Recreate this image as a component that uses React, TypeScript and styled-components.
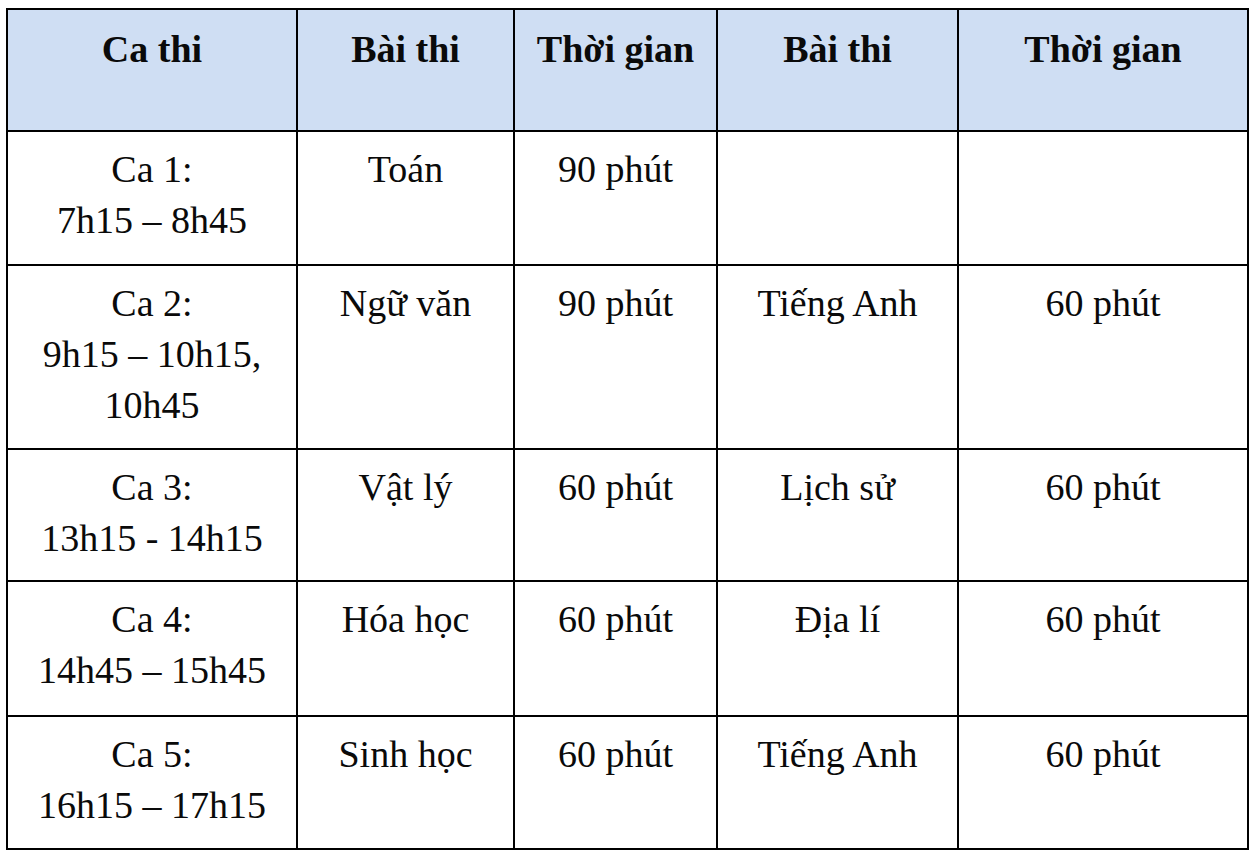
import styled, { createGlobalStyle } from "styled-components";

const GlobalStyle = createGlobalStyle`
  html, body {
    margin: 0;
    padding: 0;
    background: #ffffff;
  }
`;

const Page = styled.div`
  padding: 8px 0 0 6px;
`;

const Table = styled.table`
  border-collapse: collapse;
  table-layout: fixed;
  width: 1241px;
  font-family: "Liberation Serif", "Times New Roman", serif;
  color: #0a0a0a;
`;

const Row = styled.tr<{ $h: number }>`
  height: ${(p) => p.$h}px;
`;

const HeadCell = styled.th`
  background: #cfdef3;
  border: 2px solid #000;
  font-size: 38px;
  font-weight: bold;
  line-height: 51px;
  text-align: center;
  vertical-align: top;
  padding: 14px 4px 0;
`;

const Cell = styled.td`
  border: 2px solid #000;
  font-size: 38px;
  line-height: 51px;
  text-align: center;
  vertical-align: top;
  padding: 12px 4px 0;
`;

interface Shift {
  name: string[];
  subject1: string;
  time1: string;
  subject2: string;
  time2: string;
  height: number;
}

const shifts: Shift[] = [
  { name: ["Ca 1:", "7h15 – 8h45"], subject1: "Toán", time1: "90 phút", subject2: "", time2: "", height: 134 },
  { name: ["Ca 2:", "9h15 – 10h15,", "10h45"], subject1: "Ngữ văn", time1: "90 phút", subject2: "Tiếng Anh", time2: "60 phút", height: 184 },
  { name: ["Ca 3:", "13h15 - 14h15"], subject1: "Vật lý", time1: "60 phút", subject2: "Lịch sử", time2: "60 phút", height: 132 },
  { name: ["Ca 4:", "14h45 – 15h45"], subject1: "Hóa học", time1: "60 phút", subject2: "Địa lí", time2: "60 phút", height: 135 },
  { name: ["Ca 5:", "16h15 – 17h15"], subject1: "Sinh học", time1: "60 phút", subject2: "Tiếng Anh", time2: "60 phút", height: 133 },
];

const App: React.FC = () => {
  return (
    <Page>
      <GlobalStyle />
      <Table>
        <colgroup>
          <col style={{ width: 290 }} />
          <col style={{ width: 217 }} />
          <col style={{ width: 203 }} />
          <col style={{ width: 241 }} />
          <col style={{ width: 290 }} />
        </colgroup>
        <thead>
          <Row $h={122}>
            <HeadCell>Ca thi</HeadCell>
            <HeadCell>Bài thi</HeadCell>
            <HeadCell>Thời gian</HeadCell>
            <HeadCell>Bài thi</HeadCell>
            <HeadCell>Thời gian</HeadCell>
          </Row>
        </thead>
        <tbody>
          {shifts.map((s) => (
            <Row $h={s.height} key={s.name[0]}>
              <Cell>
                {s.name.map((line, i) => (
                  <div key={i}>{line}</div>
                ))}
              </Cell>
              <Cell>{s.subject1}</Cell>
              <Cell>{s.time1}</Cell>
              <Cell>{s.subject2}</Cell>
              <Cell>{s.time2}</Cell>
            </Row>
          ))}
        </tbody>
      </Table>
    </Page>
  );
};

export default App;
